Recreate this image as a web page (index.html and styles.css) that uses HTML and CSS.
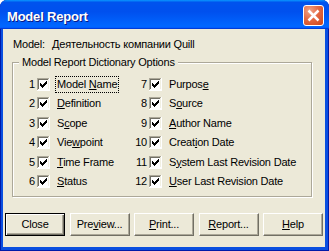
FILE: index.html
```html
<!DOCTYPE html>
<html>
<head>
<meta charset="utf-8">
<link rel="stylesheet" href="styles.css">
</head>
<body>
<svg width="0" height="0" class="defs">
  <symbol id="chk" viewBox="0 0 13 13">
    <rect x="0" y="0" width="13" height="13" fill="#ffffff"/>
    <path d="M0 0h12v1H1v11H0z" fill="#aca899"/>
    <path d="M1 1h10v1H2v9H1z" fill="#716f64"/>
    <path d="M1 11h11V1h-1v10H1z" fill="#f1efe2"/>
    <rect x="2" y="2" width="9" height="9" fill="#ffffff"/>
    <path d="M9 3h1v1H9z M8 4h2v1H8z M3 5h1v1H3z M7 5h3v1H7z M3 6h2v1H3z M6 6h3v1H6z M3 7h5v1H3z M4 8h3v1H4z M5 9h1v1H5z" fill="#000000"/>
  </symbol>
</svg>
<div class="window">
  <div class="titlebar">
    <span class="title">Model Report</span>
    <span class="xbtn">
      <svg width="21" height="21" viewBox="0 0 21 21"><path d="M5.5 5.5L15.5 15.5M15.5 5.5L5.5 15.5" stroke="#ffffff" stroke-width="2.5" fill="none"/></svg>
    </span>
  </div>
  <div class="client">
    <div class="model-row"><span class="model-label">Model:</span><span>Деятельность компании Quill</span></div>
    <div class="group">
      <div class="legend">Model Report Dictionary Options</div>
      <div class="items">
        <div class="item"><span class="num">1</span><svg class="cb" width="13" height="13"><use href="#chk"/></svg><span class="lbl focus">Model <u>N</u>ame</span></div>
        <div class="item"><span class="num">2</span><svg class="cb" width="13" height="13"><use href="#chk"/></svg><span class="lbl"><u>D</u>efinition</span></div>
        <div class="item"><span class="num">3</span><svg class="cb" width="13" height="13"><use href="#chk"/></svg><span class="lbl">S<u>c</u>ope</span></div>
        <div class="item"><span class="num">4</span><svg class="cb" width="13" height="13"><use href="#chk"/></svg><span class="lbl">Vie<u>w</u>point</span></div>
        <div class="item"><span class="num">5</span><svg class="cb" width="13" height="13"><use href="#chk"/></svg><span class="lbl"><u>T</u>ime Frame</span></div>
        <div class="item"><span class="num">6</span><svg class="cb" width="13" height="13"><use href="#chk"/></svg><span class="lbl"><u>S</u>tatus</span></div>
        <div class="item"><span class="num">7</span><svg class="cb" width="13" height="13"><use href="#chk"/></svg><span class="lbl">Purpos<u>e</u></span></div>
        <div class="item"><span class="num">8</span><svg class="cb" width="13" height="13"><use href="#chk"/></svg><span class="lbl">S<u>o</u>urce</span></div>
        <div class="item"><span class="num">9</span><svg class="cb" width="13" height="13"><use href="#chk"/></svg><span class="lbl"><u>A</u>uthor Name</span></div>
        <div class="item"><span class="num">10</span><svg class="cb" width="13" height="13"><use href="#chk"/></svg><span class="lbl">Creat<u>i</u>on Date</span></div>
        <div class="item"><span class="num">11</span><svg class="cb" width="13" height="13"><use href="#chk"/></svg><span class="lbl">S<u>y</u>stem Last Revision Date</span></div>
        <div class="item"><span class="num">12</span><svg class="cb" width="13" height="13"><use href="#chk"/></svg><span class="lbl"><u>U</u>ser Last Revision Date</span></div>
      </div>
    </div>
    <div class="buttons">
      <span class="btn default">Close</span>
      <span class="btn">Pre<u>v</u>iew...</span>
      <span class="btn"><u>P</u>rint...</span>
      <span class="btn"><u>R</u>eport...</span>
      <span class="btn"><u>H</u>elp</span>
    </div>
  </div>
</div>
</body>
</html>
```
FILE: styles.css
```css
html, body {
  margin: 0;
  padding: 0;
  background: #ffffff;
}
.defs {
  position: absolute;
  width: 0;
  height: 0;
}
.window {
  width: 329px;
  height: 251px;
  background: #0a4fe0;
  border-radius: 7px 7px 0 0;
  overflow: hidden;
  box-shadow: inset 1px 0 #0019a8, inset -1px 0 #0019a8, inset 0 -1px #0019a8;
  font-family: "Liberation Sans", Arial, sans-serif;
  font-size: 11px;
  letter-spacing: -0.2px;
  color: #000000;
}
.titlebar {
  height: 29px;
  box-sizing: border-box;
  display: flex;
  justify-content: space-between;
  align-items: flex-start;
  padding: 0 5px 0 7px;
  background: linear-gradient(180deg, #0997ff, #0053ee 8%, #0050ee 40%, #0066ff 88%, #0066ff 93%, #005bff 95%, #003dd7 96%, #003dd7);
}
.title {
  margin-top: 9px;
  font-weight: bold;
  font-size: 13px;
  line-height: 15px;
  color: #ffffff;
  text-shadow: 1px 1px #0a1883;
}
.xbtn {
  margin-top: 5px;
  width: 21px;
  height: 21px;
  box-sizing: border-box;
  border: 1px solid #ffffff;
  border-radius: 3px;
  background: radial-gradient(circle at 30% 25%, #f0a488 0%, #e46a45 45%, #cc4418 100%);
  display: flex;
  align-items: center;
  justify-content: center;
}
.xbtn svg {
  display: block;
  margin: -1px;
}
.client {
  margin: 0 4px 0 3px;
  height: 218px;
  box-sizing: border-box;
  padding-top: 9px;
  background: #ece9d8;
}
.model-row {
  margin-left: 10px;
  line-height: 13px;
  height: 13px;
  white-space: nowrap;
}
.model-label {
  display: inline-block;
  width: 39px;
}
.group {
  margin: 11px 0 0 9px;
  width: 300px;
  height: 135px;
  box-sizing: border-box;
  border: 1px solid #aca899;
  box-shadow: inset 1px 1px #ffffff, 1px 1px #ffffff;
}
.legend {
  width: fit-content;
  margin: -7px 0 0 6px;
  padding: 0 3px;
  line-height: 13px;
  background: #ece9d8;
  white-space: nowrap;
}
.items {
  margin: 6px 0 0 8px;
  display: grid;
  grid-template-columns: 112px 1fr;
  grid-template-rows: 19px 19px 20px 19px 20px 19px;
  grid-auto-flow: column;
}
.item {
  display: flex;
  align-items: center;
  white-space: nowrap;
  line-height: 13px;
}
.num {
  width: 14px;
  text-align: right;
  margin-right: 2px;
}
.cb {
  display: block;
  flex: none;
}
.lbl {
  margin-left: 5px;
  padding: 1px;
  border: 1px dotted transparent;
}
.lbl.focus {
  border-color: #000000;
}
.buttons {
  margin: 16px 0 0 2px;
  width: 318px;
  display: flex;
  justify-content: space-between;
}
.btn {
  width: 60px;
  height: 23px;
  box-sizing: border-box;
  display: flex;
  align-items: center;
  justify-content: center;
  background: #ece9d8;
  border: 1px solid;
  border-color: #ffffff #716f64 #716f64 #ffffff;
  box-shadow: inset -1px -1px #aca899;
  line-height: 13px;
}
.btn.default {
  border-color: #000000;
  box-shadow: inset 1px 1px #ffffff, inset -1px -1px #716f64, inset -2px -2px #aca899;
}
```
